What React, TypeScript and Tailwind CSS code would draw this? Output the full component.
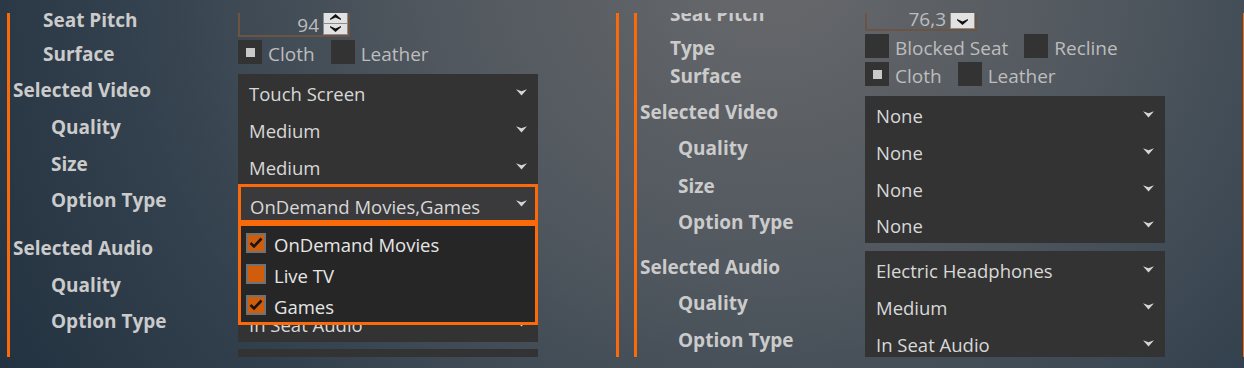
import type { ReactNode } from 'react';

const ORANGE = 'border-[#fa6a0a]';

function DropArrow() {
  return (
    <svg width="11" height="7" viewBox="0 0 11 7" className="shrink-0">
      <path d="M0 0.3 L5.5 2.2 L11 0.3 L5.5 6.6 Z" fill="#d6d6d6" />
    </svg>
  );
}

function SpinArrow({ up }: { up?: boolean }) {
  return (
    <svg width="11" height="6" viewBox="0 0 11 6" className={up ? 'rotate-180' : ''}>
      <path d="M0 0 L5.5 2.4 L11 0 L11 1.2 L5.5 6 L0 1.2 Z" fill="#111111" />
    </svg>
  );
}

function Box({ checked }: { checked?: boolean }) {
  return (
    <span className="flex h-6 w-6 shrink-0 items-center justify-center bg-[#333333]">
      {checked && <span className="h-[9px] w-[9px] bg-[#c9c9c9]" />}
    </span>
  );
}

function Check({ label, checked }: { label: string; checked?: boolean }) {
  return (
    <span className="flex h-6 items-center gap-[6px]">
      <Box checked={checked} />
      <span className="pt-[4px] text-[19px] text-[#bdbdbd]">{label}</span>
    </span>
  );
}

function Spinner({ value, single }: { value: string; single?: boolean }) {
  return (
    <div className="flex h-[25px] w-[112px] border-2 border-t-0 border-[#6b5443]">
      <div className="flex flex-1 items-center justify-end pr-[4px] pt-[3px] text-[19px] text-[#bdbdbd]">{value}</div>
      {single ? (
        <div className="flex w-[25px] items-end justify-center border border-[#8d8d8d] bg-[#e2e2e2] pb-[3px]">
          <SpinArrow />
        </div>
      ) : (
        <div className="flex w-[25px] flex-col">
          <div className="flex h-[11px] items-start justify-center border border-b-0 border-[#8d8d8d] bg-[#e2e2e2] pt-[1px]">
            <SpinArrow up />
          </div>
          <div className="flex flex-1 items-end justify-center border border-[#8d8d8d] bg-[#e2e2e2] pb-[2px]">
            <SpinArrow />
          </div>
        </div>
      )}
    </div>
  );
}

function Label({ children, cls }: { children: ReactNode; cls: string }) {
  return (
    <div className={`flex w-[228px] shrink-0 items-center text-[19px] font-bold text-[#cbcbcb] ${cls}`}>{children}</div>
  );
}

function Item({ text, h }: { text: string; h: string }) {
  return (
    <div className={`flex items-center justify-between pl-[11px] pr-[11px] text-[#d8d8d8] ${h}`}>
      <span className="pt-[3px]">{text}</span>
      <DropArrow />
    </div>
  );
}

function Popup() {
  const opts = [
    { text: 'OnDemand Movies', on: true },
    { text: 'Live TV', on: false },
    { text: 'Games', on: true },
  ];
  return (
    <div
      className={`absolute left-[-3px] right-[-3px] top-[calc(100%+3px)] z-10 border-[3px] bg-[#262626] pb-[3px] ${ORANGE}`}
    >
      {opts.map((o) => (
        <div key={o.text} className="flex h-[31px] items-center gap-2 pl-[5px] pt-[2px]">
          <span className="flex h-5 w-5 shrink-0 items-center justify-center border-2 border-[#727272] bg-[#cf5d0c]">
            {o.on && (
              <svg width="14" height="12" viewBox="0 0 14 12">
                <path d="M1.5 6 L5 9.5 L12.5 1.5" fill="none" stroke="#151515" strokeWidth="2.6" />
              </svg>
            )}
          </span>
          <span className="pt-[4px] text-[#e6e6e6]">{o.text}</span>
        </div>
      ))}
    </div>
  );
}

function LeftCard() {
  return (
    <div className={`h-[344px] w-[612px] shrink-0 overflow-hidden border-x-[3px] ${ORANGE}`}>
      <div className="-mt-px flex flex-col">
        <div className="flex">
          <Label cls="h-[25px] pb-[9px] pl-[33px]">Seat Pitch</Label>
          <Spinner value="94" />
        </div>
        <div className="mt-[3px] flex">
          <Label cls="h-6 pt-[4px] pl-[33px]">Surface</Label>
          <div className="flex gap-4">
            <Check label="Cloth" checked />
            <Check label="Leather" />
          </div>
        </div>
        <div className="mt-[10px] flex">
          <div className="flex flex-col">
            <Label cls="h-[37px] pb-[5px] pl-[3px]">Selected Video</Label>
            <Label cls="h-[37px] pb-[5px] pl-[41px]">Quality</Label>
            <Label cls="h-[36px] pb-[5px] pl-[41px]">Size</Label>
            <Label cls="h-[39px] pb-[7px] pl-[41px]">Option Type</Label>
          </div>
          <div className="flex w-[300px] flex-col bg-[#333333]">
            <Item text="Touch Screen" h="h-[37px]" />
            <Item text="Medium" h="h-[37px]" />
            <Item text="Medium" h="h-[36px]" />
            <div
              className={`relative flex h-[39px] items-center justify-between border-[3px] bg-[#3a3a3c] pl-[9px] pr-[8px] text-[#d8d8d8] ${ORANGE}`}
            >
              <span className="pt-[6px]">OnDemand Movies,Games</span>
              <DropArrow />
              <Popup />
            </div>
          </div>
        </div>
        <div className="mt-2 flex">
          <div className="flex flex-col">
            <Label cls="h-[37px] pb-[3px] pl-[3px]">Selected Audio</Label>
            <Label cls="h-[37px] pb-[3px] pl-[41px]">Quality</Label>
            <Label cls="h-[37px] pb-[5px] pl-[41px]">Option Type</Label>
          </div>
          <div className="flex w-[300px] flex-col bg-[#333333]">
            <Item text="Electric Headphones" h="h-[37px]" />
            <Item text="Medium" h="h-[37px]" />
            <Item text="In Seat Audio" h="h-[37px]" />
          </div>
        </div>
        <div className="mt-[7px] flex">
          <div className="w-[228px] shrink-0" />
          <div className="h-[40px] w-[300px] bg-[#333333]" />
        </div>
      </div>
    </div>
  );
}

function RightCard() {
  return (
    <div className={`h-[344px] w-[612px] shrink-0 overflow-hidden border-x-[3px] ${ORANGE}`}>
      <div className="-mt-[7px] flex flex-col">
        <div className="flex">
          <Label cls="h-[25px] pb-[9px] pl-[33px]">Seat Pitch</Label>
          <Spinner value="76,3" single />
        </div>
        <div className="mt-[3px] flex">
          <Label cls="h-6 pt-[4px] pl-[33px]">Type</Label>
          <div className="flex gap-4">
            <Check label="Blocked Seat" />
            <Check label="Recline" />
          </div>
        </div>
        <div className="mt-[4px] flex">
          <Label cls="h-6 pt-[4px] pl-[33px]">Surface</Label>
          <div className="flex gap-4">
            <Check label="Cloth" checked />
            <Check label="Leather" />
          </div>
        </div>
        <div className="mt-[10px] flex">
          <div className="flex flex-col">
            <Label cls="h-[37px] pb-[5px] pl-[3px]">Selected Video</Label>
            <Label cls="h-[37px] pb-[7px] pl-[41px]">Quality</Label>
            <Label cls="h-[36px] pb-[5px] pl-[41px]">Size</Label>
            <Label cls="h-[37px] pb-[5px] pl-[41px]">Option Type</Label>
          </div>
          <div className="flex w-[300px] flex-col bg-[#333333]">
            <Item text="None" h="h-[37px]" />
            <Item text="None" h="h-[37px]" />
            <Item text="None" h="h-[36px]" />
            <Item text="None" h="h-[37px]" />
          </div>
        </div>
        <div className="mt-2 flex">
          <div className="flex flex-col">
            <Label cls="h-[37px] pb-[5px] pl-[3px]">Selected Audio</Label>
            <Label cls="h-[37px] pb-[7px] pl-[41px]">Quality</Label>
            <Label cls="h-[37px] pb-[7px] pl-[41px]">Option Type</Label>
          </div>
          <div className="flex w-[300px] flex-col bg-[#333333]">
            <Item text="Electric Headphones" h="h-[37px]" />
            <Item text="Medium" h="h-[37px]" />
            <Item text="In Seat Audio" h="h-[37px]" />
          </div>
        </div>
      </div>
    </div>
  );
}

export default function App() {
  return (
    <div className="h-[368px] w-full overflow-hidden bg-[radial-gradient(80%_250%_at_62%_-10%,#68696c_0%,#50575e_35%,#33414e_65%,#1c2b3a_100%)] font-['Open_Sans','Noto_Sans',sans-serif] text-[18.5px] leading-[24px]">
      <div className="flex gap-[15px] pl-[7px] pt-[13px]">
        <LeftCard />
        <RightCard />
      </div>
    </div>
  );
}
